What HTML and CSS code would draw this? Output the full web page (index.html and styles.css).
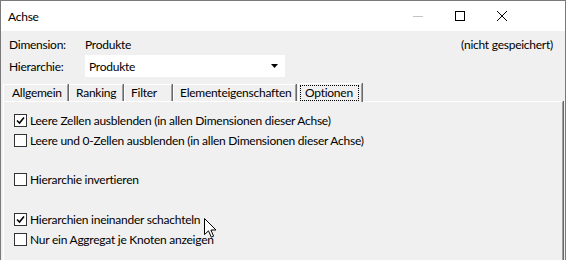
FILE: index.html
```html
<!DOCTYPE html>
<html lang="de">
<head>
  <meta charset="UTF-8">
  <meta name="viewport" content="width=device-width, initial-scale=1">
  <title>Achse</title>
  <link rel="stylesheet" href="styles.css">
</head>
<body>
  <div class="window">
    <div class="titlebar">
      <div class="title">Achse</div>
      <div class="controls">
        <span class="ctl"><svg width="10" height="10" viewBox="0 0 10 10"><path d="M0 5.5h10" stroke="#c4c4c4" stroke-width="1"/></svg></span>
        <span class="ctl"><svg width="10" height="10" viewBox="0 0 10 10"><rect x="0.5" y="0.5" width="9" height="9" fill="none" stroke="#000" stroke-width="1"/></svg></span>
        <span class="ctl"><svg width="10" height="10" viewBox="0 0 10 10"><path d="M0 0L10 10M10 0L0 10" stroke="#000" stroke-width="1"/></svg></span>
      </div>
    </div>

    <div class="content">
      <div class="row">
        <span class="lbl">Dimension:</span>
        <span class="val">Produkte</span>
        <span class="status">(nicht gespeichert)</span>
      </div>
      <div class="row">
        <span class="lbl">Hierarchie:</span>
        <div class="combo">
          <span>Produkte</span>
          <svg class="arrow" width="7" height="4" viewBox="0 0 7 4"><path d="M0 0h7L3.5 4z" fill="#000"/></svg>
        </div>
      </div>

      <div class="tabs">
        <div class="tab t-allg">Allgemein</div>
        <div class="tab t-rank">Ranking</div>
        <div class="tab t-filt">Filter</div>
        <div class="tab t-elem">Elementeigenschaften</div>
        <div class="tab active"><span class="focus">Optionen</span></div>
      </div>

      <div class="panel">
        <label class="cb"><span class="box"><svg width="9" height="9" viewBox="0 0 9 9"><path d="M1 4.5L3.5 7L8 1.5" fill="none" stroke="#000" stroke-width="1.6"/></svg></span>Leere Zellen ausblenden (in allen Dimensionen dieser Achse)</label>
        <label class="cb"><span class="box"></span>Leere und 0-Zellen ausblenden (in allen Dimensionen dieser Achse)</label>
        <label class="cb gap"><span class="box"></span>Hierarchie invertieren</label>
        <label class="cb gap gap-wide"><span class="box"><svg width="9" height="9" viewBox="0 0 9 9"><path d="M1 4.5L3.5 7L8 1.5" fill="none" stroke="#000" stroke-width="1.6"/></svg></span>Hierarchien ineinander schachteln</label>
        <label class="cb"><span class="box"></span>Nur ein Aggregat je Knoten anzeigen</label>
      </div>
    </div>

    <!-- mouse pointer -->
    <svg class="cursor" width="13" height="20" viewBox="0 0 13 20"><path d="M0.5 0.5V16.5L4.5 12.8L7.3 19.2L9.6 18.2L6.9 12H12z" fill="#fff" stroke="#000" stroke-width="1"/></svg>
  </div>
</body>
</html>
```

FILE: styles.css
```css
html, body { margin: 0; padding: 0; }
body { width: 566px; height: 260px; overflow: hidden; font-family: Lato, "Liberation Sans", sans-serif; font-size: 12px; letter-spacing: -0.25px; color: #000; }
.window { position: relative; box-sizing: border-box; width: 566px; height: 260px; border: 1px solid #7a7a7a; border-bottom: none; background: #f0f0f0; overflow: hidden; }
.titlebar { display: flex; align-items: center; height: 30px; background: #fff; }
.title { padding-left: 7px; font-size: 12px; }
.controls { display: flex; margin-left: auto; height: 30px; padding-right: 42px; }
.ctl { display: flex; align-items: center; justify-content: center; width: 42px; height: 30px; }
.content { padding-top: 2px; }
.row { display: flex; align-items: center; height: 22px; padding-left: 8px; }
.lbl { width: 76px; }
.status { margin-left: auto; margin-right: 12px; }
.combo { display: flex; align-items: center; width: 196px; height: 22px; padding-left: 4px; background: #fff; }
.combo .arrow { margin-left: auto; margin-right: 7px; }
.tabs { display: flex; align-items: flex-end; height: 19px; margin-top: 5px; padding-left: 2px; }
.tab { box-sizing: border-box; height: 17px; line-height: 15px; padding-left: 8px; border-top: 1px solid #fff; border-left: 1px solid #fff; border-right: 1px solid #a0a0a0; box-shadow: 1px 0 0 #696969; margin-right: 1px; white-space: nowrap; }
.t-allg { width: 65px; }
.t-rank { width: 54px; padding-left: 6px; }
.t-filt { width: 48px; padding-left: 6px; }
.t-elem { width: 123px; padding-left: 6px; }
.tab.active { height: 19px; width: 64px; padding: 1px 0 0 1px; margin-left: 1px; position: relative; top: 1px; background: #f0f0f0; z-index: 1; }
.focus { display: inline-block; box-sizing: border-box; height: 16px; line-height: 14px; padding: 0 5px 0 4px; border: 1px dotted #000; }
.panel { box-sizing: border-box; height: 170px; margin-left: 2px; margin-right: 2px; padding: 8px 0 0 10px; border-top: 1px solid #fff; border-left: 1px solid #fff; border-right: 1px solid #a0a0a0; box-shadow: 1px 0 0 #696969; display: flex; flex-direction: column; }
.cb { display: flex; align-items: center; height: 20px; }
.cb.gap { margin-top: 19px; }
.cb.gap-wide { margin-top: 20px; }
.box { box-sizing: border-box; display: flex; align-items: center; justify-content: center; width: 13px; height: 13px; margin-right: 3px; border: 1px solid #333; background: #fff; }
.cursor { position: absolute; left: 203px; top: 217px; }
```
